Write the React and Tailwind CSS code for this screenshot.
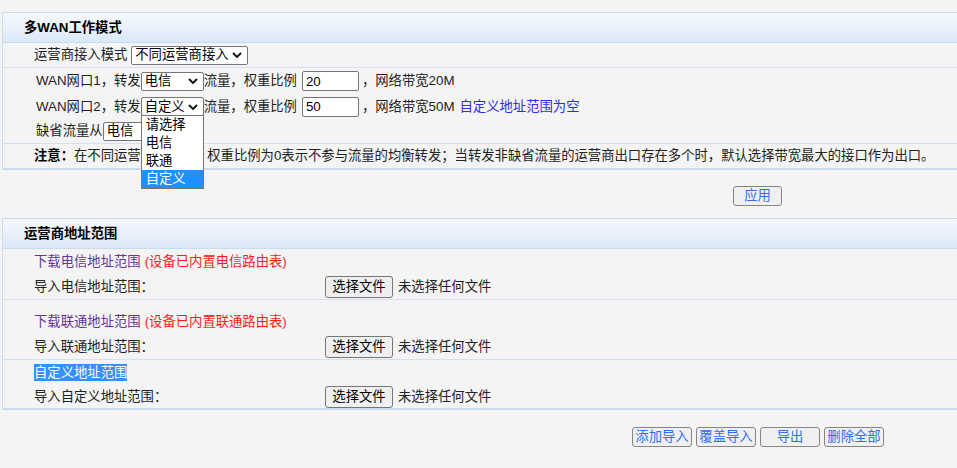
const Chevron = () => (
  <svg width="10" height="6" viewBox="0 0 10 6" className="shrink-0">
    <path d="M1 1L5 5L9 1" fill="none" stroke="#111" strokeWidth="1.9" />
  </svg>
);

function FakeSelect({ value, className, children }) {
  return (
    <div
      className={`relative flex h-[19px] items-center justify-between rounded-[2px] border border-[#767676] bg-white pl-[3px] pr-[5px] text-black ${className}`}
    >
      <span>{value}</span>
      <Chevron />
      {children}
    </div>
  );
}

function TextBox({ value }) {
  return (
    <input
      type="text"
      defaultValue={value}
      className="h-[20px] w-[57px] rounded-[2px] border border-[#767676] bg-white px-[3px] text-black outline-none"
    />
  );
}

function FileRow({ label, className = "h-[24px]" }) {
  return (
    <div className={`flex items-center ${className}`}>
      <span className="w-[291px]">{label}</span>
      <button
        type="button"
        className="h-[22px] w-[68px] rounded-[3px] border border-[#767676] bg-[#efefef] text-black"
      >
        选择文件
      </button>
      <span className="ml-[5px]">未选择任何文件</span>
    </div>
  );
}

function ActionButton({ label, width = "w-[60px]" }) {
  return (
    <button
      type="button"
      className={`h-[20px] rounded-[3px] border border-[#858585] bg-[#f0f0f0] text-[#2f6ef0] ${width}`}
    >
      {label}
    </button>
  );
}

const options = ["请选择", "电信", "联通", "自定义"];

export default function App() {
  return (
    <div className="min-h-[468px] bg-[#f4f4f4] pt-[12px] font-['Liberation_Sans','Noto_Sans_CJK_SC',sans-serif] text-[13.33px] leading-[18px] text-[#222]">
      {/* 多WAN工作模式 */}
      <div className="ml-[2px] border-t border-b-2 border-l border-[#c8dbf0]">
        <div className="flex h-[30px] items-center border-b border-[#c8dbf0] bg-linear-to-b from-[#f6f9fe] to-[#dbe8f8] pl-[21px] font-bold text-black">
          多WAN工作模式
        </div>

        <div className="flex h-[25px] items-center border-b border-[#d3e0ee] pl-[31px]">
          <span>运营商接入模式</span>
          <FakeSelect value="不同运营商接入" className="ml-[4px] w-[117px]" />
        </div>

        <div className="border-b border-[#d3e0ee] pl-[33px]">
          <div className="flex h-[26px] items-center">
            <span>WAN网口1，转发</span>
            <FakeSelect value="电信" className="w-[63px]" />
            <span>流量，权重比例</span>
            <div className="ml-[5px]">
              <TextBox value="20" />
            </div>
            <span className="ml-[3px]">，网络带宽20M</span>
          </div>
          <div className="flex h-[25px] items-center">
            <span>WAN网口2，转发</span>
            <FakeSelect value="自定义" className="z-10 w-[63px]">
              <div className="absolute top-[17px] -left-px w-[63px] border border-[#767676] bg-white">
                {options.map((o) => (
                  <div
                    key={o}
                    className={`h-[18px] pl-[4px] leading-[18px] ${
                      o === "自定义" ? "bg-[#1e90ff] text-white" : "text-black"
                    }`}
                  >
                    {o}
                  </div>
                ))}
              </div>
            </FakeSelect>
            <span>流量，权重比例</span>
            <div className="ml-[5px]">
              <TextBox value="50" />
            </div>
            <span className="ml-[3px]">，网络带宽50M</span>
            <span className="ml-[5px] text-[#2b2bf5]">自定义地址范围为空</span>
          </div>
          <div className="flex h-[24px] items-center">
            <span>缺省流量从</span>
            <FakeSelect value="电信" className="w-[63px]" />
          </div>
        </div>

        <div className="flex h-[24px] items-center pl-[31px]">
          <span className="font-bold text-black">注意：</span>
          <span>
            在不同运营商模式下，权重比例为0表示不参与流量的均衡转发；当转发非缺省流量的运营商出口存在多个时，默认选择带宽最大的接口作为出口。
          </span>
        </div>
      </div>

      <div className="flex pt-[16px] pb-[12px] pl-[733px]">
        <ActionButton label="应用" width="w-[49px]" />
      </div>

      {/* 运营商地址范围 */}
      <div className="ml-[2px] border-t border-b-2 border-l border-[#c8dbf0]">
        <div className="flex h-[30px] items-center border-b border-[#c8dbf0] bg-linear-to-b from-[#f6f9fe] to-[#dbe8f8] pl-[21px] font-bold text-black">
          运营商地址范围
        </div>

        <div className="border-b border-[#d3e0ee] pl-[31px]">
          <div className="flex h-[26px] items-center">
            <span className="text-[#663399]">下载电信地址范围</span>
            <span className="ml-[4px] text-[#ff1a1a]">(设备已内置电信路由表)</span>
          </div>
          <FileRow label="导入电信地址范围：" />
        </div>

        <div className="border-b border-[#d3e0ee] pt-[9px] pl-[31px]">
          <div className="flex h-[26px] items-center">
            <span className="text-[#663399]">下载联通地址范围</span>
            <span className="ml-[4px] text-[#ff1a1a]">(设备已内置联通路由表)</span>
          </div>
          <FileRow label="导入联通地址范围：" />
        </div>

        <div className="pl-[31px]">
          <div className="flex h-[25px] items-center">
            <span className="bg-[#3390ff] leading-[17px] text-white">自定义地址范围</span>
          </div>
          <FileRow label="导入自定义地址范围：" className="h-[23px]" />
        </div>
      </div>

      <div className="flex gap-[4px] pt-[17px] pl-[632px]">
        <ActionButton label="添加导入" />
        <ActionButton label="覆盖导入" />
        <ActionButton label="导出" />
        <ActionButton label="删除全部" />
      </div>
    </div>
  );
}
